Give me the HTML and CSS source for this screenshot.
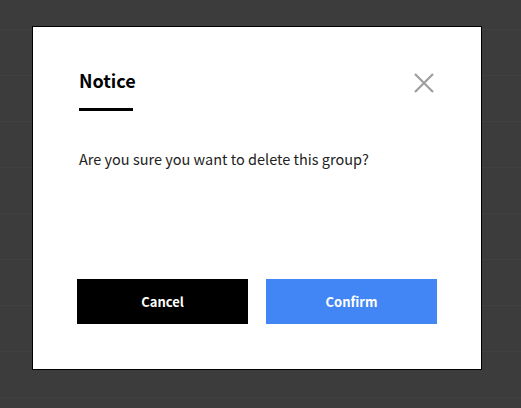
FILE: index.html
```html
<!DOCTYPE html>
<html lang="en">
<head>
<meta charset="utf-8">
<title>Notice</title>
<link rel="stylesheet" href="styles.css">
</head>
<body>
<div class="page">
  <div class="row row-first"></div>
  <div class="row"></div>
  <div class="row"></div>
  <div class="row"></div>
  <div class="row"></div>
  <div class="row"></div>
  <div class="row"></div>
  <div class="row"></div>
  <div class="row"></div>
</div>
<div class="dialog" role="dialog">
  <div class="dialog-header">
    <h2 class="dialog-title">Notice</h2>
    <button class="dialog-close" aria-label="Close">
      <svg width="20" height="20" viewBox="0 0 20 20"><path d="M1 1L19 19M19 1L1 19" stroke="#9e9e9e" stroke-width="2.2" fill="none"/></svg>
    </button>
  </div>
  <div class="dialog-rule"></div>
  <p class="dialog-message">Are you sure you want to delete this group?</p>
  <div class="dialog-actions">
    <button class="btn btn-cancel">Cancel</button>
    <button class="btn btn-confirm">Confirm</button>
  </div>
</div>
</body>
</html>
```

FILE: styles.css
```css
html, body {
  margin: 0;
  padding: 0;
}
body {
  background: #3c3c3c;
  font-family: "Noto Sans CJK KR", "Noto Sans", sans-serif;
  width: 521px;
  height: 408px;
  overflow: hidden;
}
.page {
  display: flex;
  flex-direction: column;
}
.row {
  height: 45px;
  border-bottom: 1px solid #414141;
  flex: none;
}
.row-first {
  height: 29px;
}
.dialog {
  position: absolute;
  left: 32px;
  top: 26px;
  width: 450px;
  height: 344px;
  box-sizing: border-box;
  background: #ffffff;
  border: 1px solid #000000;
  padding: 40px 44px 45px;
  display: flex;
  flex-direction: column;
}
.dialog-header {
  display: flex;
  justify-content: space-between;
  align-items: flex-start;
}
.dialog-title {
  margin: 0 0 0 2px;
  font-size: 18px;
  font-weight: 700;
  line-height: 26px;
  color: #000000;
}
.dialog-close {
  margin: 6px 3px 0 0;
  padding: 0;
  border: 0;
  background: none;
  width: 20px;
  height: 20px;
  display: flex;
}
.dialog-rule {
  margin: 15px 0 0 2px;
  width: 54px;
  height: 3px;
  background: #000000;
}
.dialog-message {
  margin: 38px 0 0 2px;
  font-size: 14.5px;
  line-height: 20px;
  color: #222222;
}
.dialog-actions {
  margin-top: auto;
  display: flex;
  gap: 18px;
}
.btn {
  flex: 1;
  height: 45px;
  border: 0;
  padding: 0;
  font-family: "Noto Sans CJK KR", "Noto Sans", sans-serif;
  font-size: 13px;
  font-weight: 700;
  color: #ffffff;
}
.btn-cancel {
  background: #000000;
}
.btn-confirm {
  background: #4286f5;
}
```
